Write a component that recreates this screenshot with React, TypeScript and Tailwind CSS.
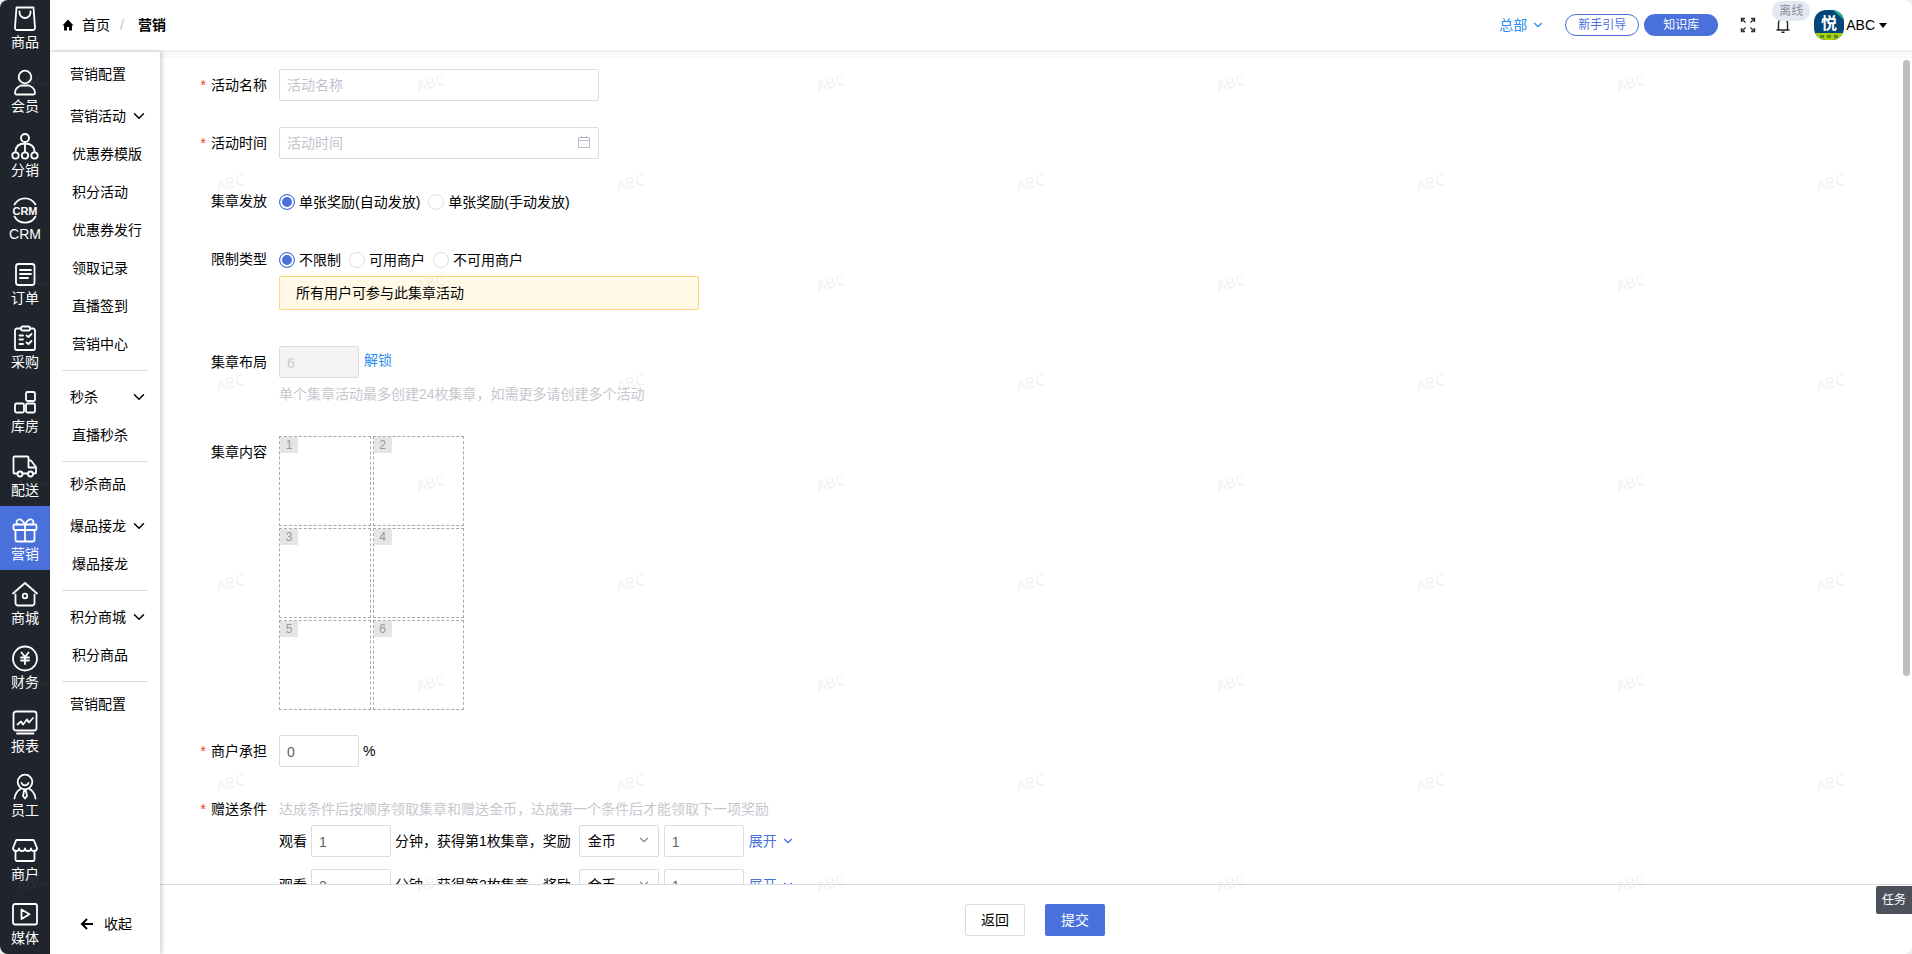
import { ReactNode } from "react";
import clsx from "clsx";
import { ChevronDown } from "lucide-react";

const navItems: { label: string; icon: ReactNode }[] = [
  {
    label: "商品",
    icon: (
      <>
        <path d="M4.500 1.500h17l1.500 20a2 2 0 0 1-2 2.500H5a2 2 0 0 1-2-2.500z" />
        <path d="M7.500 5.500v1a5.500 5.500 0 0 0 11 0v-1" />
      </>
    ),
  },
  {
    label: "会员",
    icon: (
      <>
        <circle cx="13" cy="7" r="6.3" />
        <path d="M9 15.500h8c4 1.500 6 4 6 7.500 0 1-.6 1.500-1.500 1.500h-17c-.9 0-1.500-.5-1.500-1.500 0-3.500 2-6 6-7.500z" />
      </>
    ),
  },
  {
    label: "分销",
    icon: (
      <>
        <circle cx="13" cy="4" r="4" />
        <path d="M13 8v10M3.500 18c0-6 4-8.500 9.500-8.500s9.500 2.500 9.500 8.500" />
        <circle cx="3.500" cy="21.500" r="3.200" />
        <circle cx="13" cy="21.500" r="3.200" />
        <circle cx="22.500" cy="21.500" r="3.200" />
      </>
    ),
  },
  {
    label: "CRM",
    icon: (
      <>
        <path d="M2.500 6.500a12 12 0 0 1 21 0M2.500 18.500a12 12 0 0 0 21 0" />
        <text x="13" y="16.500" textAnchor="middle" fontSize="11" fontWeight="bold" fill="currentColor" stroke="none">
          CRM
        </text>
      </>
    ),
  },
  {
    label: "订单",
    icon: (
      <>
        <rect x="4" y="2" width="18.500" height="21" rx="2.500" />
        <path d="M8 8h11M8 12h11M8 16h8" />
      </>
    ),
  },
  {
    label: "采购",
    icon: (
      <>
        <path d="M9 2.500H5a2 2 0 0 0-2 2V22a2 2 0 0 0 2 2h16a2 2 0 0 0 2-2V4.500a2 2 0 0 0-2-2h-3" />
        <rect x="9" y=".5" width="9" height="4" rx="1.500" />
        <path d="M7.500 9.500h3.500M7.500 13.500h3.500M7.500 18h3.500M14.500 9.500l2 1.500 3-3M14.500 16.500l2 1.500 3-3" />
      </>
    ),
  },
  {
    label: "库房",
    icon: (
      <>
        <rect x="14" y="2" width="9" height="9" rx="1.500" />
        <rect x="3" y="13.500" width="9" height="9" rx="1.500" />
        <rect x="14" y="13.500" width="9" height="9" rx="1.500" />
      </>
    ),
  },
  {
    label: "配送",
    icon: (
      <>
        <path d="M5 19.500H2.500a1 1 0 0 1-1-1v-15a1 1 0 0 1 1-1h13a1 1 0 0 1 1 1v3h2.500l5 6.500v5.500a1 1 0 0 1-1 1h-1.500M10.500 19.500H16M16.500 7v6.500H24" />
        <circle cx="8" cy="20" r="2.500" />
        <circle cx="18.500" cy="20" r="2.500" />
      </>
    ),
  },
  {
    label: "营销",
    icon: (
      <>
        <rect x="1.500" y="6.500" width="23" height="5.500" rx="1.200" />
        <path d="M3.500 12v10a1.500 1.500 0 0 0 1.500 1.500h16a1.500 1.500 0 0 0 1.500-1.500V12M13 6.500v17" />
        <path d="M13 6.500C11 2.500 8.500 1 6.500 1.500 4 2.200 4 5.500 6 6.500M13 6.500c2-4 4.500-5.500 6.500-5 2.500.7 2.500 4 .5 5" />
      </>
    ),
  },
  {
    label: "商城",
    icon: (
      <>
        <path d="M1 11.500L13 1l12 10.500" />
        <path d="M3.500 12.500V21a2.500 2.500 0 0 0 2.500 2.500h14a2.500 2.500 0 0 0 2.500-2.500v-8.500" />
        <circle cx="13" cy="14" r="2.300" />
      </>
    ),
  },
  {
    label: "财务",
    icon: (
      <>
        <circle cx="13" cy="12.500" r="12" />
        <path d="M9.500 6.500L13 11l3.500-4.500M13 11v7M9 11.500h8M9 14.500h8" />
      </>
    ),
  },
  {
    label: "报表",
    icon: (
      <>
        <rect x="1.500" y="1.500" width="23" height="19" rx="2.500" />
        <path d="M5 23.500h16.500M5.500 14.500l3.500-3 2 3 4-5 2 3 4-4.500" />
      </>
    ),
  },
  {
    label: "员工",
    icon: (
      <>
        <circle cx="13" cy="8" r="7.300" />
        <path d="M9.500 9a3.800 3.800 0 0 0 7 0M2.500 24.500c.5-4.500 2.500-7.500 6-9.500M23.500 24.500c-.5-4.500-2.500-7.500-6-9.500" />
        <path d="M12 17h2l1 5-2 2.500-2-2.500z" />
      </>
    ),
  },
  {
    label: "商户",
    icon: (
      <>
        <path d="M5 2h16a1 1 0 0 1 1 .7L25 10c0 2-1.500 3-3 3s-3-1-3-2.500c0 1.500-1.500 2.500-3 2.500s-3-1-3-2.500c0 1.500-1.500 2.500-3 2.500s-3-1-3-2.500C7 12 5.500 13 4 13s-3-1-3-3l3-7.300A1 1 0 0 1 5 2z" />
        <path d="M3.500 13v8.500A1.500 1.500 0 0 0 5 23h16a1.500 1.500 0 0 0 1.500-1.500V13" />
      </>
    ),
  },
  {
    label: "媒体",
    icon: (
      <>
        <rect x="1" y="2" width="24" height="20.500" rx="2" />
        <path d="M9.500 7.500v9.500l8-4.800z" />
      </>
    ),
  },
];

type MenuEntry = { title: string; children?: string[]; divider?: boolean };

const menu: MenuEntry[] = [
  { title: "营销配置" },
  {
    title: "营销活动",
    children: ["优惠券模版", "积分活动", "优惠券发行", "领取记录", "直播签到", "营销中心"],
  },
  { title: "秒杀", children: ["直播秒杀"], divider: true },
  { title: "秒杀商品", divider: true },
  { title: "爆品接龙", children: ["爆品接龙"] },
  { title: "积分商城", children: ["积分商品"], divider: true },
  { title: "营销配置", divider: true },
];

const inputBase = "h-8 rounded-xs border border-[#dcdcdc] bg-white px-[7px] outline-none placeholder:text-[#c0c4cc]";

function MainNav() {
  return (
    <nav className="flex w-[50px] shrink-0 flex-col justify-end overflow-hidden bg-[#20242d] text-white">
      {navItems.map(({ label, icon }) => (
        <a
          key={label}
          href="#"
          className={clsx(
            "flex h-16 shrink-0 flex-col items-center pt-3 leading-5",
            label === "营销" && "bg-[#4a70db]"
          )}
        >
          <svg
            viewBox="0 0 26 26"
            className="h-[26px] w-[26px] shrink-0 overflow-visible"
            fill="none"
            stroke="currentColor"
            strokeWidth="1.8"
            strokeLinecap="round"
            strokeLinejoin="round"
          >
            {icon}
          </svg>
          {label}
        </a>
      ))}
    </nav>
  );
}

function SubMenu() {
  return (
    <aside className="relative z-10 flex w-[110px] shrink-0 flex-col bg-white shadow-[2px_0_4px_rgba(0,0,0,0.18)]">
      <div className="flex-1">
        {menu.map(({ title, children, divider }, i) => (
          <div key={i}>
            {divider && <hr className="mx-3 mt-[7px] border-[#dcdcdc]" />}
            {children ? (
              <>
                <button
                  type="button"
                  className={clsx("flex h-[38px] w-full items-center justify-between pr-3 pl-5", divider && "mt-[7px]")}
                >
                  {title}
                  <ChevronDown className="h-[18px] w-[18px]" strokeWidth={2} />
                </button>
                {children.map((child) => (
                  <a key={child} href="#" className="flex h-[38px] items-center pl-[22px]">
                    {child}
                  </a>
                ))}
              </>
            ) : (
              <a href="#" className="flex h-[45px] items-center pb-0.5 pl-5">
                {title}
              </a>
            )}
          </div>
        ))}
      </div>
      <button type="button" className="flex h-[60px] items-center gap-2.5 pl-[30px]">
        <svg viewBox="0 0 14 14" className="h-3.5 w-3.5" fill="none" stroke="currentColor" strokeWidth="2">
          <path d="M7 2L2 7l5 5M2 7h11" />
        </svg>
        收起
      </button>
    </aside>
  );
}

function Avatar() {
  return (
    <svg viewBox="0 0 30 30" className="h-[30px] w-[30px]">
      <clipPath id="avatar">
        <rect width="30" height="30" rx="12" />
      </clipPath>
      <g clipPath="url(#avatar)">
        <rect width="30" height="30" fill="#04457a" />
        <path d="M19 0h11v10z" fill="#12b886" />
        <rect y="23" width="30" height="7" fill="#a8cf0a" />
        <path d="M6 25h4v3H6zM13 25h4v3h-4zM20 25h4v3h-4z" fill="#4f8f1a" />
        <text x="15" y="18.500" textAnchor="middle" fontSize="16" fontWeight="bold" fill="#fff">
          悦
        </text>
      </g>
    </svg>
  );
}

function Header() {
  return (
    <header className="flex h-[52px] shrink-0 items-center justify-between border-b-2 border-[#f0f0f0] bg-white pr-[25px] pl-3 shadow-[0_6px_0_#f9f9f9]">
      <div className="flex items-center">
        <svg viewBox="0 0 12 12" className="mr-2 h-3 w-3" fill="currentColor">
          <path d="M6 .5L.5 6.500H2V11.500h3V8h2v3.500h3V6.500h1.500z" />
        </svg>
        <a href="#">首页</a>
        <span className="mx-1 w-4 text-center text-[#c0c4cc]">/</span>
        <span className="ml-1 font-bold">营销</span>
      </div>
      <div className="flex items-center">
        <button type="button" className="flex items-center gap-1 text-[#2d8cf0]">
          总部
          <ChevronDown className="h-3.5 w-3.5" />
        </button>
        <button
          type="button"
          className="ml-5 h-[22px] w-[74px] rounded-full border border-[#4a70db] text-xs text-[#4a70db]"
        >
          新手引导
        </button>
        <button type="button" className="ml-[5px] h-[22px] w-[74px] rounded-full bg-[#4a70db] text-xs text-white">
          知识库
        </button>
        <button type="button" aria-label="全屏" className="ml-[22px]">
          <svg viewBox="0 0 16 16" className="h-4 w-4" fill="none" stroke="#333" strokeWidth="1.400">
            <path d="M1.500 5V1.500H5M1.500 1.500L5.500 5.500M11 1.500h3.500V5M14.500 1.500L10.500 5.500M1.500 11v3.500H5M1.500 14.500L5.500 10.500M11 14.500h3.500V11M14.500 14.500L10.500 10.500" />
          </svg>
        </button>
        <div className="relative ml-5">
          <svg viewBox="0 0 14 16" className="h-4 w-3.5" fill="none" stroke="#222" strokeWidth="1.400">
            <path d="M2.500 13V6a4.500 4.500 0 0 1 9 0v7M.5 13h13M5.500 15.300h3" />
          </svg>
          <span className="absolute -top-4 -left-1 flex h-5 w-[38px] items-center justify-center rounded-full bg-[#e4e8f0] text-xs text-[#8a90a0]">
            离线
          </span>
        </div>
        <button type="button" className="ml-6 flex items-center">
          <Avatar />
          <span className="ml-0.5">ABC</span>
          <svg viewBox="0 0 8 5" className="ml-1 h-[5px] w-2" fill="currentColor">
            <path d="M0 0h8L4 5z" />
          </svg>
        </button>
      </div>
    </header>
  );
}

function Row({
  label,
  htmlFor,
  required,
  className = "mb-[26px]",
  children,
}: {
  label: string;
  htmlFor?: string;
  required?: boolean;
  className?: string;
  children: ReactNode;
}) {
  return (
    <div className={clsx("flex items-start", className)}>
      <label htmlFor={htmlFor} className="flex w-[107px] shrink-0 justify-end leading-8">
        {required && <span className="mr-[5px] text-[#ed4014]">*</span>}
        {label}
      </label>
      <div className="ml-3">{children}</div>
    </div>
  );
}

function RadioGroup({ name, options }: { name: string; options: string[] }) {
  return (
    <div className="flex h-[33px] items-center gap-2">
      {options.map((option, i) => (
        <label key={option} className="flex items-center gap-1">
          <input
            type="radio"
            name={name}
            defaultChecked={i === 0}
            className="h-4 w-4 appearance-none rounded-full border border-[#dcdfe6] bg-white checked:border-[#4a70db] checked:bg-[#4a70db] checked:shadow-[inset_0_0_0_2px_#fff]"
          />
          {option}
        </label>
      ))}
    </div>
  );
}

function ConditionRow({ index }: { index: number }) {
  return (
    <div className="mb-3 flex h-8 items-center">
      <label htmlFor={`minutes-${index}`}>观看</label>
      <input id={`minutes-${index}`} defaultValue={index} className={clsx(inputBase, "ml-1 w-20 pt-0.5 text-[#606266]")} />
      <span className="ml-1">分钟，获得第{index}枚集章，奖励</span>
      <div className="relative ml-2">
        <select aria-label="奖励类型" className={clsx(inputBase, "block w-20 appearance-none pl-2")}>
          <option>金币</option>
        </select>
        <ChevronDown className="pointer-events-none absolute top-2 right-2 h-3.5 w-3.5 text-[#808695]" />
      </div>
      <input aria-label="奖励数量" defaultValue={1} className={clsx(inputBase, "ml-[5px] w-20 pt-0.5 text-[#606266]")} />
      <button type="button" className="ml-[5px] flex items-center gap-1 text-[#4a70db]">
        展开
        <ChevronDown className="h-3.5 w-3.5" />
      </button>
    </div>
  );
}

function ActivityForm() {
  return (
    <form className="min-h-0 flex-1 overflow-hidden pt-[17px]">
      <Row label="活动名称" htmlFor="name" required>
        <input id="name" placeholder="活动名称" className={clsx(inputBase, "block w-80")} />
      </Row>
      <Row label="活动时间" htmlFor="time" required>
        <div className="relative">
          <input id="time" placeholder="活动时间" className={clsx(inputBase, "block w-80")} />
          <svg viewBox="0 0 14 14" className="absolute top-2 right-2 h-3.5 w-3.5" fill="none" stroke="#b8bcc8">
            <path d="M1.500 2.500h11v10h-11zM1.500 5.500h11M4.500 .5v3M9.500 .5v3" />
          </svg>
        </div>
      </Row>
      <Row label="集章发放" className="mb-[25px]">
        <RadioGroup name="grant" options={["单张奖励(自动发放)", "单张奖励(手动发放)"]} />
      </Row>
      <Row label="限制类型">
        <RadioGroup name="limit" options={["不限制", "可用商户", "不可用商户"]} />
        <div className="mb-2.5 flex h-[34px] w-[420px] items-center rounded-xs border border-[#ffd77a] bg-[#fff9e6] px-4">
          所有用户可参与此集章活动
        </div>
      </Row>
      <Row label="集章布局" htmlFor="layout">
        <div className="flex items-center gap-[5px]">
          <input
            id="layout"
            disabled
            defaultValue="6"
            className="h-8 w-20 rounded-xs border border-[#dcdcdc] bg-[#f3f3f3] px-[7px] pt-0.5 text-[#ccc]"
          />
          <a href="#" className="pb-1 text-[#2d8cf0]">
            解锁
          </a>
        </div>
        <p className="leading-8 text-[#c5c8ce]">单个集章活动最多创建24枚集章，如需更多请创建多个活动</p>
      </Row>
      <Row label="集章内容" className="mb-[25px]">
        <div className="grid w-[185px] grid-cols-2 gap-0.5">
          {[1, 2, 3, 4, 5, 6].map((n) => (
            <div key={n} className="h-[90px] border border-dashed border-[#aaa]">
              <span className="flex h-4 w-[18px] items-center justify-center bg-[#e5e5e5] text-xs text-[#999]">{n}</span>
            </div>
          ))}
        </div>
      </Row>
      <Row label="商户承担" htmlFor="share" required>
        <div className="flex items-center gap-1">
          <input id="share" defaultValue="0" className={clsx(inputBase, "w-20 pt-0.5 text-[#606266]")} />
          <span>%</span>
        </div>
      </Row>
      <Row label="赠送条件" required>
        <p className="leading-8 text-[#c5c8ce]">达成条件后按顺序领取集章和赠送金币，达成第一个条件后才能领取下一项奖励</p>
        <ConditionRow index={1} />
        <ConditionRow index={2} />
      </Row>
    </form>
  );
}

// Faint tiled user name laid over the whole page
function Watermark() {
  return (
    <svg className="pointer-events-none absolute inset-0 z-30 h-full w-full" aria-hidden="true">
      <pattern id="watermark" width="400" height="200" patternUnits="userSpaceOnUse">
        <g fill="#808080" fillOpacity="0.12" fontSize="15" fontFamily="Open Sans" textAnchor="middle">
          <text transform="translate(32 88) rotate(-15)">ABC</text>
          <text transform="translate(232 188) rotate(-15)">ABC</text>
        </g>
      </pattern>
      <rect width="100%" height="100%" fill="url(#watermark)" />
    </svg>
  );
}

export default function App() {
  return (
    <div className="h-screen bg-[#eee]">
      <div className="relative flex h-full overflow-hidden rounded-lg bg-white font-['Liberation_Sans','Noto_Sans_CJK_SC',sans-serif] text-sm text-black">
        <MainNav />
        <div className="flex min-w-0 flex-1 flex-col">
          <Header />
          <div className="flex min-h-0 flex-1">
            <SubMenu />
            <main className="relative flex min-w-0 flex-1 flex-col">
              <ActivityForm />
              <div className="absolute top-2 right-0.5 h-[616px] w-[7px] rounded-full bg-[#bfbfbf]" />
              <footer className="flex h-[70px] shrink-0 items-center justify-center gap-5 border-t border-[#dcdcdc] bg-white pr-0.5">
                <button type="button" className="h-8 w-[60px] rounded-xs border border-[#dcdcdc]">
                  返回
                </button>
                <button type="submit" className="h-8 w-[60px] rounded-xs bg-[#4a70db] text-white">
                  提交
                </button>
              </footer>
              <button
                type="button"
                className="absolute right-0 bottom-10 h-7 w-9 rounded-l-xs bg-[#4c515b] text-xs text-white"
              >
                任务
              </button>
            </main>
          </div>
        </div>
        <Watermark />
      </div>
    </div>
  );
}
